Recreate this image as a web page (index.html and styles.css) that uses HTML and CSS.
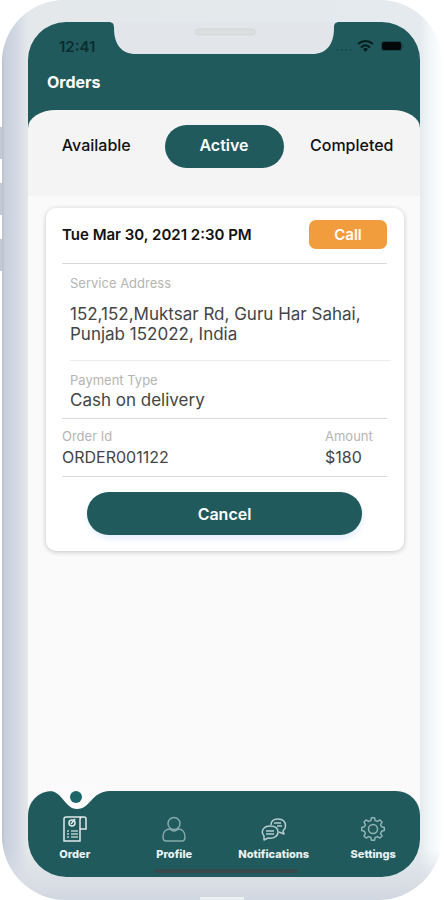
FILE: index.html
```html
<!DOCTYPE html>
<html lang="en">
<head>
<meta charset="utf-8">
<meta name="viewport" content="width=device-width, initial-scale=1">
<title>Orders</title>
<link rel="stylesheet" href="styles.css">
</head>
<body>
<div class="phone">
  <div class="side-keys" aria-hidden="true"><i></i><i></i><i></i></div>
  <div class="screen">
    <svg class="notch" viewBox="0 0 232 33" aria-hidden="true">
      <path d="M0 0C5 0 6 2 6 6C6 22 13 32 28 32H204C219 32 226 22 226 6C226 2 227 0 232 0Z" fill="#e2e6ea"/>
      <rect x="87" y="7" width="60" height="6" rx="3" fill="#dcdee0" stroke="#d3d6d9" stroke-width="1"/>
    </svg>
    <header class="top">
      <div class="status">
        <span class="time">12:41</span>
        <svg class="status-icons" viewBox="0 0 72 14" aria-hidden="true">
          <g fill="#164a4c"><circle cx="5" cy="11" r="1"/><circle cx="10" cy="11" r="1"/><circle cx="14" cy="11" r="1"/><circle cx="19" cy="11" r="1"/></g>
          <g fill="none" stroke="#071b1c" stroke-width="2"><path d="M26 5Q33.500-1 41 5"/><path d="M29 8.500Q33.500 4 38 8.500"/></g>
          <path d="M31 10Q33.500 8 36 10L33.500 13Z" fill="#071b1c"/>
          <rect x="49" y="2" width="21" height="10" rx="3" fill="#174648"/>
          <rect x="50" y="3" width="19" height="8" rx="2" fill="#030808"/>
          <path d="M70.500 5Q72.500 7 70.500 9Z" fill="#123e40"/>
        </svg>
      </div>
      <h1>Orders</h1>
    </header>
    <nav class="tabs">
      <button type="button">Available</button>
      <button type="button" class="active">Active</button>
      <button type="button">Completed</button>
    </nav>
    <main>
      <article class="card">
        <div class="card-head">
          <h2>Tue Mar 30, 2021 2:30 PM</h2>
          <button type="button" class="call">Call</button>
        </div>
        <section class="row address">
          <h3>Service Address</h3>
          <p>152,152,Muktsar Rd, Guru Har Sahai,<br>Punjab 152022, India</p>
        </section>
        <section class="row payment">
          <h3>Payment Type</h3>
          <p>Cash on delivery</p>
        </section>
        <section class="totals">
          <div><h3>Order Id</h3><p>ORDER001122</p></div>
          <div class="amount"><h3>Amount</h3><p>$180</p></div>
        </section>
        <button type="button" class="cancel">Cancel</button>
      </article>
    </main>
    <nav class="bottom">
      <svg class="dip" viewBox="0 0 64 20" aria-hidden="true">
        <path d="M0 0C13 1 15 18 27 18C41 18 40 1 60 0Z" fill="#fbfbfb"/>
        <circle cx="26" cy="6" r="6" fill="#1d6667"/>
      </svg>
      <a href="#order">
        <svg viewBox="0 0 26 26" fill="none" stroke="#dfeaea" stroke-width="1.500" aria-hidden="true">
          <path d="M4 1H22Q24 1 24 3V13H18M18 13V25H2V3Q2 1 4 1M18 13V4Q18 1 20 1"/>
          <circle cx="10" cy="7" r="3"/><path d="M9 8L13 3"/>
          <path d="M5 15H7M9 15H16M5 18H7M9 18H16M5 21H7M9 21H16" stroke="#b4cbcb"/>
        </svg>
        <span>Order</span></a>
      <a href="#profile">
        <svg viewBox="0 0 26 26" fill="none" stroke="#86aaab" stroke-width="1.500" aria-hidden="true">
          <circle cx="13" cy="7.500" r="6"/><path d="M9 13C5 13 2 16 2 21Q2 25 5 25H21Q24 25 24 21C24 16 21 13 17 13Q13 17 9 13Z"/>
        </svg>
        <span>Profile</span></a>
      <a href="#notifications">
        <svg viewBox="0 0 26 26" fill="none" stroke="#b5cbcc" stroke-width="1.500" stroke-linejoin="round" aria-hidden="true">
          <path d="M10 9C10 5 13 3 17 3C22 3 24.500 6 24.500 10Q24.500 13 22 15L23 18L18 16"/>
          <path d="M3 24V20C-1 15 3 10 9 10C15 10 17 13 17 16C17 20 13 23 7 22ZM13 7H20M16 10H21M5 15H13M5 18H13"/>
        </svg>
        <span>Notifications</span></a>
      <a href="#settings">
        <svg viewBox="0 0 26 26" fill="none" stroke="#92b2b3" stroke-width="1.500" stroke-linejoin="round" aria-hidden="true">
          <path d="M11.500 1.700H14.500L15.200 4.500L17.450 5.430L19.900 3.950L22.050 6.070L20.570 8.550L21.500 10.800L24.300 11.500V14.500L21.500 15.200L20.570 17.450L22.050 19.930L19.900 22.050L17.450 20.570L15.200 21.500L14.500 24.300H11.500L10.800 21.500L8.550 20.570L6.100 22.050L3.950 19.930L5.430 17.450L4.500 15.200L1.700 14.500V11.500L4.500 10.800L5.430 8.550L3.950 6.070L6.100 3.950L8.550 5.430L10.800 4.500Z"/>
          <circle cx="13" cy="13" r="4.500"/>
        </svg>
        <span>Settings</span></a>
    </nav>
  </div>
  <div class="port" aria-hidden="true"></div>
</div>
</body>
</html>
```

FILE: styles.css
```css
* { box-sizing: border-box; }
body { margin: 0; background: #fff; font-family: Inter, "Liberation Sans", sans-serif; color: #111; }
h1, h2, h3, p { margin: 0; }
button { border: 0; padding: 0; background: none; font: inherit; color: inherit; }
.phone {
  position: relative;
  min-height: 100vh;
  margin: 0 3px 0 2px;
  padding: 22px 22px 23px 26px;
  display: flex;
  border-radius: 62px 62px 64px 64px;
  background:
    linear-gradient(0deg, #d0d7e0 0, #d8dde4 14px, rgba(216,221,228,0) 50px),
    linear-gradient(90deg, #b9c1cc 0, #c8d0db 3px, #d2d9e4 14px, #e4e8ea 26px, #e4eaee calc(100% - 22px), #f2f6f8 calc(100% - 12px), #fcfefe 100%);
}
.side-keys { position: absolute; left: -2px; top: 127px; display: grid; gap: 24px; }
.side-keys i { width: 2px; height: 32px; background: #c4cad3; }
.port { position: absolute; left: 50%; bottom: 0; width: 44px; height: 3px; margin-left: -22px; background: #eef1f4; }
.screen { position: relative; flex: 1; display: flex; flex-direction: column; overflow: hidden; border-radius: 38px; background: #fafafa; }
.notch { position: absolute; top: 0; left: 50%; width: 232px; margin-left: -116px; }
.top { background: #205a5d; padding: 16px 16px 36px 19px; }
.status { display: flex; justify-content: space-between; align-items: center; height: 16px; padding-left: 12px; }
.time { font-size: 15px; font-weight: 600; color: #0b2c2e; }
.status-icons { width: 72px; height: 14px; }
h1 { margin-top: 18px; font-size: 16px; line-height: 20px; font-weight: 700; color: #fff; }
.tabs { margin-top: -18px; padding: 15px 0 28px; display: grid; grid-template-columns: 1fr 119px 1fr; background: linear-gradient(#205a5d 18px, #f4f4f4 18px); position: relative; z-index: 0; font-size: 16px; font-weight: 500; }
.tabs::before { content: ""; position: absolute; z-index: -1; inset: 0; background: #f4f4f4; border-radius: 28px 28px 0 0 / 18px 18px 0 0; }
.tabs button { height: 43px; line-height: 41px; padding-bottom: 2px; }
.tabs .active { border-radius: 22px; background: #205a5d; color: #fff; font-weight: 600; }
main { flex: 1; padding: 12px 16px 24px 18px; }
.card { padding: 12px 17px 16px 16px; border-radius: 10px; background: #fff; box-shadow: 0 1px 5px rgba(0,0,0,.22); }
.card-head { display: flex; justify-content: space-between; align-items: center; padding-bottom: 14px; border-bottom: 1px solid #d9d9d9; }
h2 { font-size: 15px; font-weight: 600; }
.call { width: 78px; height: 29px; border-radius: 7px; background: #f29d3d; color: #fff; font-size: 15px; font-weight: 600; }
h3 { font-size: 13px; line-height: 16px; font-weight: 400; color: #b5b5b5; }
.card p { font-size: 16px; line-height: 20px; color: #444; }
.card .row p { font-size: 17px; }
.row { margin-left: 8px; }
.address { margin-right: -4px; padding: 11px 0 16px; border-bottom: 1px solid #ececec; white-space: nowrap; }
.address p { margin-top: 13px; }
.payment { padding: 11px 0 8px; }
.payment p { margin-top: 2px; }
.totals { display: flex; justify-content: space-between; padding: 9px 0; border: solid #d9d9d9; border-width: 1px 0; }
.totals p { margin-top: 3px; }
.amount { width: 62px; }
.cancel { display: block; width: calc(100% - 50px); height: 43px; margin: 15px auto 0; border-radius: 22px; background: #205a5d; color: #fff; font-size: 16px; font-weight: 600; box-shadow: 1px 4px 6px #e5effb; }
.bottom { position: relative; display: grid; grid-template-columns: repeat(4, minmax(0, 1fr)); gap: 6px; padding: 25px 0 16px; border-radius: 24px 24px 0 0; background: #205a5d; }
.bottom::after { content: ""; position: absolute; left: 126px; right: 122px; bottom: 4px; height: 4px; border-radius: 2px; background: #38494b; }
.bottom a { display: flex; flex-direction: column; align-items: center; gap: 6px; color: #e9f2f2; font-size: 11px; line-height: 13px; font-weight: 800; text-decoration: none; }
.bottom a svg { width: 26px; height: 26px; }
.dip { position: absolute; left: 22px; top: 0; width: 64px; }
```
